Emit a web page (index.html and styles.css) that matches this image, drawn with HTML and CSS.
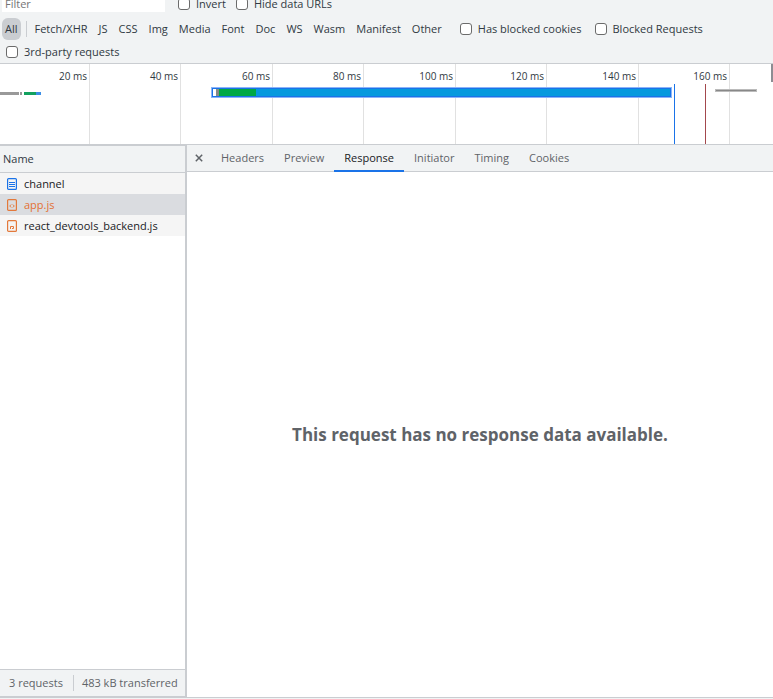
FILE: index.html
```html
<!DOCTYPE html>
<html lang="en">
<head>
  <meta charset="UTF-8" />
  <meta name="viewport" content="width=device-width, initial-scale=1.0" />
  <title>Network</title>
  <link rel="stylesheet" href="styles.css">
</head>
<body>
  <div class="filter-row">
    <input type="text" class="filter-input" placeholder="Filter" aria-label="Filter" />
    <label class="check"><input type="checkbox" />Invert</label>
    <label class="check"><input type="checkbox" />Hide data URLs</label>
  </div>
  <div class="type-bar">
    <div class="types">
      <button class="type active">All</button>
      <span class="divider"></span>
      <button class="type">Fetch/XHR</button>
      <button class="type">JS</button>
      <button class="type">CSS</button>
      <button class="type">Img</button>
      <button class="type">Media</button>
      <button class="type">Font</button>
      <button class="type">Doc</button>
      <button class="type">WS</button>
      <button class="type">Wasm</button>
      <button class="type">Manifest</button>
      <button class="type">Other</button>
    </div>
    <label class="check"><input type="checkbox" />Has blocked cookies</label>
    <label class="check"><input type="checkbox" />Blocked Requests</label>
    <label class="check"><input type="checkbox" />3rd-party requests</label>
  </div>

  <div class="overview">
    <div class="ticks">
      <span>20 ms</span>
      <span>40 ms</span>
      <span>60 ms</span>
      <span>80 ms</span>
      <span>100 ms</span>
      <span>120 ms</span>
      <span>140 ms</span>
      <span>160 ms</span>
    </div>
    <div class="line wait" style="left: 0; width: 2.5%"></div>
    <div class="line wait" style="left: 2.6%; width: 0.3%"></div>
    <div class="line green" style="left: 3.1%; width: 1.5%"></div>
    <div class="line blue" style="left: 4.7%; width: 0.6%"></div>
    <div class="request" style="left: 27.3%; width: 59.6%">
      <span class="queued"></span><span class="stalled"></span><span class="waiting"></span>
    </div>
    <div class="line late" style="left: 92.5%; width: 5.4%"></div>
    <div class="event dom" style="left: 87.2%"></div>
    <div class="event load" style="left: 91.2%"></div>
    <div class="handle"></div>
  </div>

  <div class="panels">
    <div class="requests">
      <table>
        <thead>
          <tr><th>Name</th></tr>
        </thead>
        <tbody>
          <tr>
            <td><div class="file">
              <svg class="doc" width="10" height="12" viewBox="0 0 10 12"><rect x=".6" y=".6" width="8.800" height="10.800" rx="1" /><path d="M2 4.500h6M2 6.500h6M2 8.500h6" /></svg>
              channel
            </div></td>
          </tr>
          <tr class="selected">
            <td><div class="file">
              <svg class="script" width="10" height="12" viewBox="0 0 10 12"><rect x=".6" y=".6" width="8.800" height="10.800" rx="1" /><path d="M4.200 5.500L2.700 7l1.500 1.500M5.800 5.500L7.300 7 5.800 8.500" /></svg>
              app.js
            </div></td>
          </tr>
          <tr>
            <td><div class="file">
              <svg class="script" width="10" height="12" viewBox="0 0 10 12"><rect x=".6" y=".6" width="8.800" height="10.800" rx="1" /><path d="M3.500 9V6.500h3v2H5" /></svg>
              react_devtools_backend.js
            </div></td>
          </tr>
        </tbody>
      </table>
      <div class="summary">
        <span>3 requests</span>
        <span>483 kB transferred</span>
      </div>
    </div>

    <div class="details">
      <div class="tabs">
        <button class="close" aria-label="Close">
          <svg width="8" height="8" viewBox="0 0 8 8"><path d="M.8.8l6.400 6.400M7.200.8L.8 7.200" /></svg>
        </button>
        <button class="tab">Headers</button>
        <button class="tab">Preview</button>
        <button class="tab active">Response</button>
        <button class="tab">Initiator</button>
        <button class="tab">Timing</button>
        <button class="tab">Cookies</button>
      </div>
      <div class="empty">This request has no response data available.</div>
    </div>
  </div>
</body>
</html>
```
FILE: styles.css
```css
* {
  box-sizing: border-box;
}
body {
  margin: 0;
  height: 100vh;
  display: flex;
  flex-direction: column;
  background-color: #f1f3f4;
  color: #303942;
  font-family: "Segoe UI", "Open Sans", sans-serif;
  font-size: 11px;
  line-height: 16px;
  overflow: hidden;
}
button {
  font: inherit;
  color: inherit;
  background: none;
  border: none;
  padding: 0;
}
.filter-row {
  display: flex;
  align-items: flex-end;
  height: 12px;
  gap: 10px;
  padding-left: 2px;
}
.filter-input {
  width: 163px;
  height: 16px;
  padding: 0 3px;
  border: none;
  font: inherit;
  background-color: #fff;
}
.filter-input::placeholder {
  color: #757575;
}
.check {
  display: flex;
  align-items: center;
  gap: 6px;
  white-space: nowrap;
}
.check input {
  appearance: none;
  width: 12px;
  height: 12px;
  margin: 0;
  border: 1px solid #6b6b6b;
  border-radius: 3px;
  background-color: #fff;
}
.filter-row .check {
  margin-left: 3px;
}
.filter-row .check + .check {
  margin-left: 0;
}
.type-bar {
  display: flex;
  flex-wrap: wrap;
  align-items: center;
  gap: 0 13px;
  padding: 5px 6px 0 2px;
}
.type-bar .check {
  height: 23px;
}
.type-bar .check:last-child {
  margin-left: 4px;
}
.types {
  display: flex;
  align-items: center;
  gap: 1px;
}
.type {
  height: 22px;
  padding: 0 5px;
}
.type.active {
  padding: 0 3px;
  border-radius: 6px;
  background-color: #cacdd1;
}
.divider {
  width: 1px;
  height: 16px;
  margin: 0 2px 0 4px;
  background-color: #cacdd1;
}
.overview {
  position: relative;
  height: 82px;
  flex-shrink: 0;
  border-top: 1px solid #cacdd1;
  border-bottom: 1px solid #cacdd1;
  background-color: #fff;
}
.ticks {
  display: grid;
  grid-template-columns: 90fr 91fr 92fr 91fr 92fr 91fr 92fr 91fr 43fr;
  height: 100%;
  font-size: 10px;
  line-height: 24px;
  text-align: right;
}
.ticks span {
  padding-right: 2px;
  border-right: 1px solid #e1e1e1;
}
.line {
  position: absolute;
  top: 28px;
  height: 3px;
}
.wait {
  background-color: #999;
}
.green {
  background-color: #12a15f;
}
.blue {
  background-color: #3b8ee6;
}
.late {
  top: 25px;
  border: 1px solid #bbb;
  background-color: #888;
}
.request {
  position: absolute;
  top: 23px;
  height: 11px;
  display: flex;
  border: 2px solid #1a73e8;
  outline: 1px solid #8ab4f8;
  outline-offset: -1px;
  background-color: #0699de;
}
.queued {
  width: 3px;
  background-color: #fff;
}
.stalled {
  width: 3px;
  background-color: #888;
}
.waiting {
  width: 8%;
  background-color: #00a846;
}
.event {
  position: absolute;
  top: 20px;
  bottom: 0;
  width: 1px;
}
.dom {
  background-color: #1a73e8;
}
.load {
  background-color: #a3484d;
}
.handle {
  position: absolute;
  top: 0;
  right: 0;
  width: 2px;
  height: 18px;
  background-color: #8d8d93;
}
.panels {
  flex: 1;
  display: flex;
  min-height: 0;
  margin-bottom: 1px;
  border-bottom: 1px solid #cacdd1;
  background-color: #fff;
}
.requests {
  display: flex;
  flex-direction: column;
  justify-content: space-between;
  width: 187px;
  flex-shrink: 0;
  border-right: 2px solid #cacdd1;
  border-top: 1px solid #cacdd1;
  border-bottom: 1px solid #cacdd1;
}
table {
  width: 100%;
  border-collapse: separate;
  border-spacing: 0;
}
th {
  height: 27px;
  padding: 0 3px;
  border-bottom: 1px solid #cacdd1;
  background-color: #f1f3f4;
  font-weight: normal;
  text-align: left;
}
td {
  height: 21px;
  padding: 0 7px;
  background-color: #f5f5f5;
  color: #202124;
}
.file {
  display: flex;
  align-items: center;
  gap: 7px;
}
.selected td {
  background-color: #dadce0;
  color: #e37032;
}
svg {
  fill: none;
  flex-shrink: 0;
}
.doc {
  stroke: #1a73e8;
  stroke-width: 1.2;
}
.script {
  stroke: #e3793b;
  stroke-width: 1.2;
}
.file path {
  stroke-width: 1;
}
.summary {
  display: flex;
  align-items: center;
  height: 27px;
  padding-left: 9px;
  border-top: 1px solid #cacdd1;
  background-color: #f1f3f4;
  color: #5f6368;
  white-space: nowrap;
}
.summary span + span {
  margin-left: 10px;
  padding-left: 8px;
  border-left: 1px solid #cacdd1;
}
.details {
  flex: 1;
  display: flex;
  flex-direction: column;
}
.tabs {
  display: flex;
  height: 27px;
  border-bottom: 1px solid #cacdd1;
  background-color: #f1f3f4;
  color: #5f6368;
}
.close {
  display: flex;
  align-items: center;
  justify-content: center;
  width: 24px;
}
.close path {
  stroke: #5f6368;
  stroke-width: 1.5;
}
.tab {
  padding: 1px 10px 0;
  border-bottom: 2px solid transparent;
  margin-bottom: -1px;
}
.tab.active {
  color: #202124;
  border-color: #1a73e8;
}
.empty {
  flex: 1;
  display: flex;
  align-items: center;
  justify-content: center;
  color: #5f6368;
  font-size: 17px;
  font-weight: bold;
}
```
